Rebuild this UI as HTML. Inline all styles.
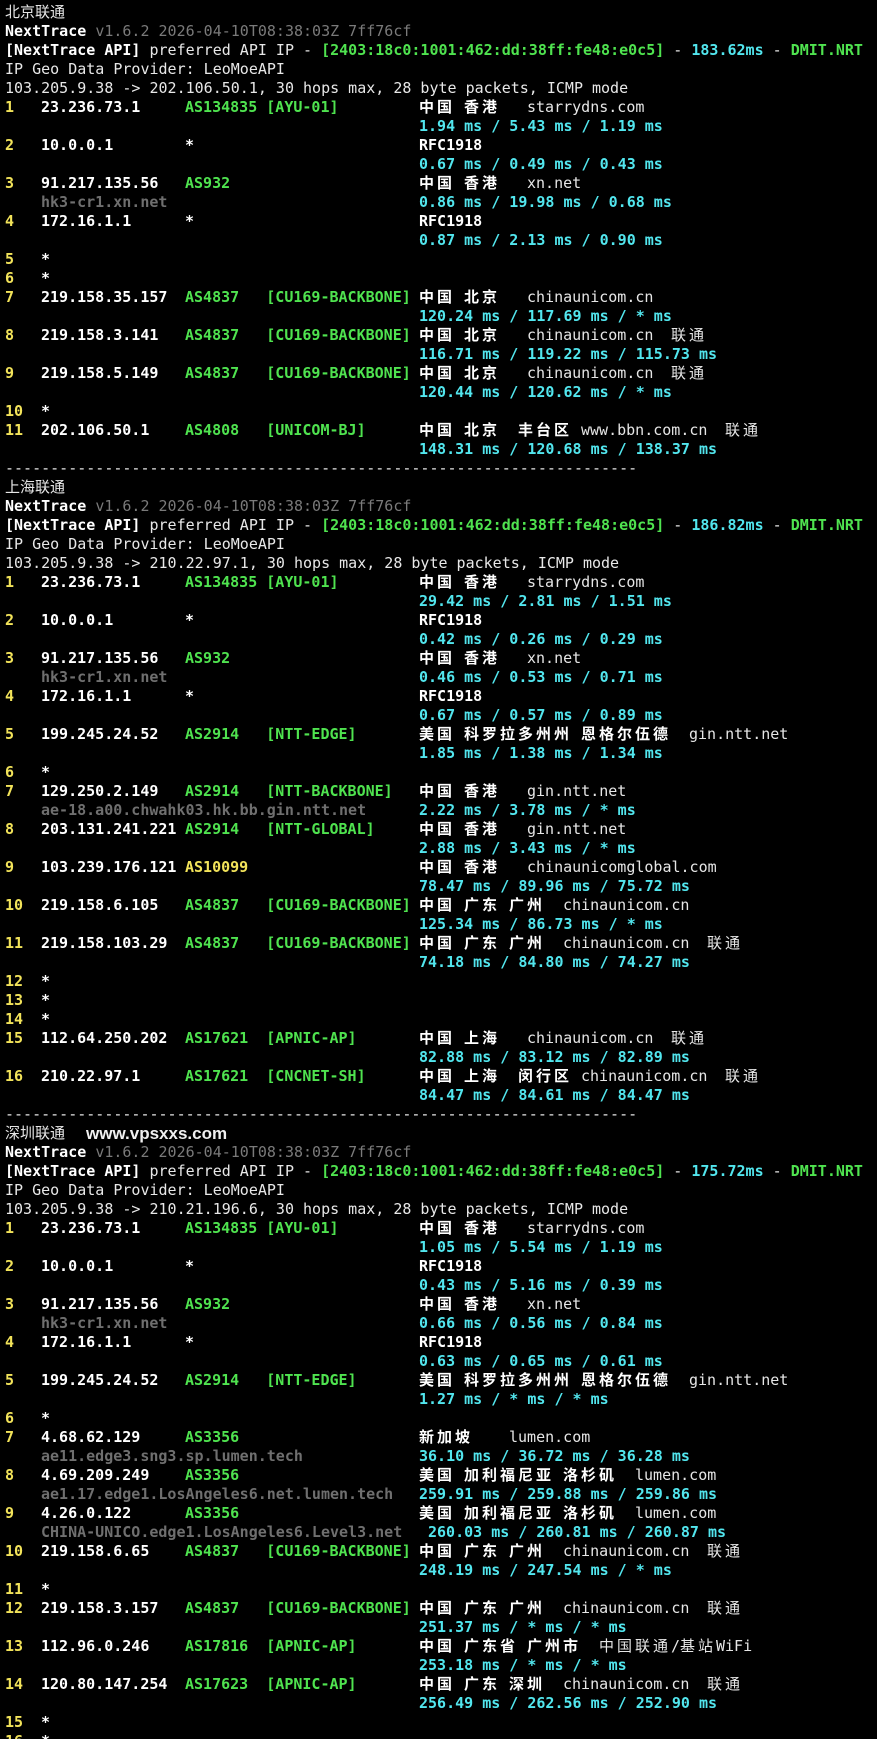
<!DOCTYPE html>
<html><head><meta charset="utf-8"><style>
html,body{margin:0;padding:0;background:#000;width:877px;height:1739px;overflow:hidden}
body{position:relative;font-family:"DejaVu Sans Mono","Liberation Mono","Noto Sans CJK SC",monospace;font-size:15px;color:#e8e8e8}
.r{position:absolute;left:0;height:19px;line-height:19px;width:877px;white-space:pre}
.r span,.r b{position:absolute;top:0;white-space:pre}
.y{color:#f2e35a;font-weight:bold}
.w{color:#fff;font-weight:bold}
.g{color:#4fe34f;font-weight:bold}
.c{color:#52e6ee;font-weight:bold}
.d{color:#e6e6e6;font-weight:normal}
.h{color:#6f6f6f;font-weight:bold}
.v{color:#7a7a7a}
.r .z{font-family:"Noto Sans CJK SC","WenQuanYi Zen Hei",sans-serif;font-size:15px;letter-spacing:3px;color:#fff;font-weight:bold;top:-1px}
.r .zn{font-family:"Noto Sans CJK SC","WenQuanYi Zen Hei",sans-serif;font-size:15px;letter-spacing:3px;color:#e6e6e6;font-weight:normal;top:-1px}
.r .t{font-family:"Noto Sans CJK SC","WenQuanYi Zen Hei",sans-serif;font-size:15px;color:#e6e6e6;left:5px;top:-1px}
.a0{left:5px}.a4{left:41px}.a20{left:185px}.a29{left:266px}.a46{left:419px}.a47{left:428px}
.a51{left:464px}.a56{left:509px}.a57{left:518px}.a58{left:527px}.a62{left:563px}.a64{left:581px}
.a66{left:599px}.a70{left:635px}.a74{left:671px}.a75{left:680px}.a76{left:689px}.a78{left:707px}.a79{left:716px}.a80{left:725px}
</style></head><body>

<div class="r" style="top:3px"><span class="t">北京联通</span></div>
<div class="r" style="top:22px"><span class="a0"><b class="w" style="position:static">NextTrace</b> <span class="v" style="position:static">v1.6.2 2026-04-10T08:38:03Z 7ff76cf</span></span></div>
<div class="r" style="top:41px"><span class="a0"><b class="w" style="position:static">[NextTrace API]</b> preferred API IP - <b class="g" style="position:static">[2403:18c0:1001:462:dd:38ff:fe48:e0c5]</b> - <b class="c" style="position:static">183.62ms</b> - <b class="g" style="position:static">DMIT.NRT</b></span></div>
<div class="r" style="top:60px"><span class="a0">IP Geo Data Provider: LeoMoeAPI</span></div>
<div class="r" style="top:79px"><span class="a0">103.205.9.38 -&gt; 202.106.50.1, 30 hops max, 28 byte packets, ICMP mode</span></div>

<div class="r" style="top:98px"><b class="y a0">1</b><b class="w a4">23.236.73.1</b><b class="g a20">AS134835 [AYU-01]</b><span class="z a46">中国</span><span class="z a51">香港</span><span class="d a58">starrydns.com</span></div>
<div class="r" style="top:117px"><b class="c a46">1.94 ms / 5.43 ms / 1.19 ms</b></div>
<div class="r" style="top:136px"><b class="y a0">2</b><b class="w a4">10.0.0.1</b><b class="w a20">*</b><b class="w a46">RFC1918</b></div>
<div class="r" style="top:155px"><b class="c a46">0.67 ms / 0.49 ms / 0.43 ms</b></div>
<div class="r" style="top:174px"><b class="y a0">3</b><b class="w a4">91.217.135.56</b><b class="g a20">AS932</b><span class="z a46">中国</span><span class="z a51">香港</span><span class="d a58">xn.net</span></div>
<div class="r" style="top:193px"><b class="h a4">hk3-cr1.xn.net</b><b class="c a46">0.86 ms / 19.98 ms / 0.68 ms</b></div>
<div class="r" style="top:212px"><b class="y a0">4</b><b class="w a4">172.16.1.1</b><b class="w a20">*</b><b class="w a46">RFC1918</b></div>
<div class="r" style="top:231px"><b class="c a46">0.87 ms / 2.13 ms / 0.90 ms</b></div>
<div class="r" style="top:250px"><b class="y a0">5</b><b class="w a4">*</b></div>
<div class="r" style="top:269px"><b class="y a0">6</b><b class="w a4">*</b></div>
<div class="r" style="top:288px"><b class="y a0">7</b><b class="w a4">219.158.35.157</b><b class="g a20">AS4837   [CU169-BACKBONE]</b><span class="z a46">中国</span><span class="z a51">北京</span><span class="d a58">chinaunicom.cn</span></div>
<div class="r" style="top:307px"><b class="c a46">120.24 ms / 117.69 ms / * ms</b></div>
<div class="r" style="top:326px"><b class="y a0">8</b><b class="w a4">219.158.3.141</b><b class="g a20">AS4837   [CU169-BACKBONE]</b><span class="z a46">中国</span><span class="z a51">北京</span><span class="d a58">chinaunicom.cn</span><span class="zn a74">联通</span></div>
<div class="r" style="top:345px"><b class="c a46">116.71 ms / 119.22 ms / 115.73 ms</b></div>
<div class="r" style="top:364px"><b class="y a0">9</b><b class="w a4">219.158.5.149</b><b class="g a20">AS4837   [CU169-BACKBONE]</b><span class="z a46">中国</span><span class="z a51">北京</span><span class="d a58">chinaunicom.cn</span><span class="zn a74">联通</span></div>
<div class="r" style="top:383px"><b class="c a46">120.44 ms / 120.62 ms / * ms</b></div>
<div class="r" style="top:402px"><b class="y a0">10</b><b class="w a4">*</b></div>
<div class="r" style="top:421px"><b class="y a0">11</b><b class="w a4">202.106.50.1</b><b class="g a20">AS4808   [UNICOM-BJ]</b><span class="z a46">中国</span><span class="z a51">北京</span><span class="z a57">丰台区</span><span class="d a64">www.bbn.com.cn</span><span class="zn a80">联通</span></div>
<div class="r" style="top:440px"><b class="c a46">148.31 ms / 120.68 ms / 138.37 ms</b></div>
<div class="r" style="top:459px"><span class="a0">----------------------------------------------------------------------</span></div>

<div class="r" style="top:478px"><span class="t">上海联通</span></div>
<div class="r" style="top:497px"><span class="a0"><b class="w" style="position:static">NextTrace</b> <span class="v" style="position:static">v1.6.2 2026-04-10T08:38:03Z 7ff76cf</span></span></div>
<div class="r" style="top:516px"><span class="a0"><b class="w" style="position:static">[NextTrace API]</b> preferred API IP - <b class="g" style="position:static">[2403:18c0:1001:462:dd:38ff:fe48:e0c5]</b> - <b class="c" style="position:static">186.82ms</b> - <b class="g" style="position:static">DMIT.NRT</b></span></div>
<div class="r" style="top:535px"><span class="a0">IP Geo Data Provider: LeoMoeAPI</span></div>
<div class="r" style="top:554px"><span class="a0">103.205.9.38 -&gt; 210.22.97.1, 30 hops max, 28 byte packets, ICMP mode</span></div>

<div class="r" style="top:573px"><b class="y a0">1</b><b class="w a4">23.236.73.1</b><b class="g a20">AS134835 [AYU-01]</b><span class="z a46">中国</span><span class="z a51">香港</span><span class="d a58">starrydns.com</span></div>
<div class="r" style="top:592px"><b class="c a46">29.42 ms / 2.81 ms / 1.51 ms</b></div>
<div class="r" style="top:611px"><b class="y a0">2</b><b class="w a4">10.0.0.1</b><b class="w a20">*</b><b class="w a46">RFC1918</b></div>
<div class="r" style="top:630px"><b class="c a46">0.42 ms / 0.26 ms / 0.29 ms</b></div>
<div class="r" style="top:649px"><b class="y a0">3</b><b class="w a4">91.217.135.56</b><b class="g a20">AS932</b><span class="z a46">中国</span><span class="z a51">香港</span><span class="d a58">xn.net</span></div>
<div class="r" style="top:668px"><b class="h a4">hk3-cr1.xn.net</b><b class="c a46">0.46 ms / 0.53 ms / 0.71 ms</b></div>
<div class="r" style="top:687px"><b class="y a0">4</b><b class="w a4">172.16.1.1</b><b class="w a20">*</b><b class="w a46">RFC1918</b></div>
<div class="r" style="top:706px"><b class="c a46">0.67 ms / 0.57 ms / 0.89 ms</b></div>
<div class="r" style="top:725px"><b class="y a0">5</b><b class="w a4">199.245.24.52</b><b class="g a20">AS2914   [NTT-EDGE]</b><span class="z a46">美国</span><span class="z a51">科罗拉多州州</span><span class="z a64">恩格尔伍德</span><span class="d a76">gin.ntt.net</span></div>
<div class="r" style="top:744px"><b class="c a46">1.85 ms / 1.38 ms / 1.34 ms</b></div>
<div class="r" style="top:763px"><b class="y a0">6</b><b class="w a4">*</b></div>
<div class="r" style="top:782px"><b class="y a0">7</b><b class="w a4">129.250.2.149</b><b class="g a20">AS2914   [NTT-BACKBONE]</b><span class="z a46">中国</span><span class="z a51">香港</span><span class="d a58">gin.ntt.net</span></div>
<div class="r" style="top:801px"><b class="h a4">ae-18.a00.chwahk03.hk.bb.gin.ntt.net</b><b class="c a46">2.22 ms / 3.78 ms / * ms</b></div>
<div class="r" style="top:820px"><b class="y a0">8</b><b class="w a4">203.131.241.221</b><b class="g a20">AS2914   [NTT-GLOBAL]</b><span class="z a46">中国</span><span class="z a51">香港</span><span class="d a58">gin.ntt.net</span></div>
<div class="r" style="top:839px"><b class="c a46">2.88 ms / 3.43 ms / * ms</b></div>
<div class="r" style="top:858px"><b class="y a0">9</b><b class="w a4">103.239.176.121</b><b class="y a20">AS10099</b><span class="z a46">中国</span><span class="z a51">香港</span><span class="d a58">chinaunicomglobal.com</span></div>
<div class="r" style="top:877px"><b class="c a46">78.47 ms / 89.96 ms / 75.72 ms</b></div>
<div class="r" style="top:896px"><b class="y a0">10</b><b class="w a4">219.158.6.105</b><b class="g a20">AS4837   [CU169-BACKBONE]</b><span class="z a46">中国</span><span class="z a51">广东</span><span class="z a56">广州</span><span class="d a62">chinaunicom.cn</span></div>
<div class="r" style="top:915px"><b class="c a46">125.34 ms / 86.73 ms / * ms</b></div>
<div class="r" style="top:934px"><b class="y a0">11</b><b class="w a4">219.158.103.29</b><b class="g a20">AS4837   [CU169-BACKBONE]</b><span class="z a46">中国</span><span class="z a51">广东</span><span class="z a56">广州</span><span class="d a62">chinaunicom.cn</span><span class="zn a78">联通</span></div>
<div class="r" style="top:953px"><b class="c a46">74.18 ms / 84.80 ms / 74.27 ms</b></div>
<div class="r" style="top:972px"><b class="y a0">12</b><b class="w a4">*</b></div>
<div class="r" style="top:991px"><b class="y a0">13</b><b class="w a4">*</b></div>
<div class="r" style="top:1010px"><b class="y a0">14</b><b class="w a4">*</b></div>
<div class="r" style="top:1029px"><b class="y a0">15</b><b class="w a4">112.64.250.202</b><b class="g a20">AS17621  [APNIC-AP]</b><span class="z a46">中国</span><span class="z a51">上海</span><span class="d a58">chinaunicom.cn</span><span class="zn a74">联通</span></div>
<div class="r" style="top:1048px"><b class="c a46">82.88 ms / 83.12 ms / 82.89 ms</b></div>
<div class="r" style="top:1067px"><b class="y a0">16</b><b class="w a4">210.22.97.1</b><b class="g a20">AS17621  [CNCNET-SH]</b><span class="z a46">中国</span><span class="z a51">上海</span><span class="z a57">闵行区</span><span class="d a64">chinaunicom.cn</span><span class="zn a80">联通</span></div>
<div class="r" style="top:1086px"><b class="c a46">84.47 ms / 84.61 ms / 84.47 ms</b></div>
<div class="r" style="top:1105px"><span class="a0">----------------------------------------------------------------------</span></div>

<div class="r" style="top:1124px"><span class="t">深圳联通</span><span style="left:86px;font-family:'Liberation Sans',sans-serif;font-size:17px;font-weight:bold;color:#f0f0f0">www.vpsxxs.com</span></div>
<div class="r" style="top:1143px"><span class="a0"><b class="w" style="position:static">NextTrace</b> <span class="v" style="position:static">v1.6.2 2026-04-10T08:38:03Z 7ff76cf</span></span></div>
<div class="r" style="top:1162px"><span class="a0"><b class="w" style="position:static">[NextTrace API]</b> preferred API IP - <b class="g" style="position:static">[2403:18c0:1001:462:dd:38ff:fe48:e0c5]</b> - <b class="c" style="position:static">175.72ms</b> - <b class="g" style="position:static">DMIT.NRT</b></span></div>
<div class="r" style="top:1181px"><span class="a0">IP Geo Data Provider: LeoMoeAPI</span></div>
<div class="r" style="top:1200px"><span class="a0">103.205.9.38 -&gt; 210.21.196.6, 30 hops max, 28 byte packets, ICMP mode</span></div>

<div class="r" style="top:1219px"><b class="y a0">1</b><b class="w a4">23.236.73.1</b><b class="g a20">AS134835 [AYU-01]</b><span class="z a46">中国</span><span class="z a51">香港</span><span class="d a58">starrydns.com</span></div>
<div class="r" style="top:1238px"><b class="c a46">1.05 ms / 5.54 ms / 1.19 ms</b></div>
<div class="r" style="top:1257px"><b class="y a0">2</b><b class="w a4">10.0.0.1</b><b class="w a20">*</b><b class="w a46">RFC1918</b></div>
<div class="r" style="top:1276px"><b class="c a46">0.43 ms / 5.16 ms / 0.39 ms</b></div>
<div class="r" style="top:1295px"><b class="y a0">3</b><b class="w a4">91.217.135.56</b><b class="g a20">AS932</b><span class="z a46">中国</span><span class="z a51">香港</span><span class="d a58">xn.net</span></div>
<div class="r" style="top:1314px"><b class="h a4">hk3-cr1.xn.net</b><b class="c a46">0.66 ms / 0.56 ms / 0.84 ms</b></div>
<div class="r" style="top:1333px"><b class="y a0">4</b><b class="w a4">172.16.1.1</b><b class="w a20">*</b><b class="w a46">RFC1918</b></div>
<div class="r" style="top:1352px"><b class="c a46">0.63 ms / 0.65 ms / 0.61 ms</b></div>
<div class="r" style="top:1371px"><b class="y a0">5</b><b class="w a4">199.245.24.52</b><b class="g a20">AS2914   [NTT-EDGE]</b><span class="z a46">美国</span><span class="z a51">科罗拉多州州</span><span class="z a64">恩格尔伍德</span><span class="d a76">gin.ntt.net</span></div>
<div class="r" style="top:1390px"><b class="c a46">1.27 ms / * ms / * ms</b></div>
<div class="r" style="top:1409px"><b class="y a0">6</b><b class="w a4">*</b></div>
<div class="r" style="top:1428px"><b class="y a0">7</b><b class="w a4">4.68.62.129</b><b class="g a20">AS3356</b><span class="z a46">新加坡</span><span class="d a56">lumen.com</span></div>
<div class="r" style="top:1447px"><b class="h a4">ae11.edge3.sng3.sp.lumen.tech</b><b class="c a46">36.10 ms / 36.72 ms / 36.28 ms</b></div>
<div class="r" style="top:1466px"><b class="y a0">8</b><b class="w a4">4.69.209.249</b><b class="g a20">AS3356</b><span class="z a46">美国</span><span class="z a51">加利福尼亚</span><span class="z a62">洛杉矶</span><span class="d a70">lumen.com</span></div>
<div class="r" style="top:1485px"><b class="h a4">ae1.17.edge1.LosAngeles6.net.lumen.tech</b><b class="c a46">259.91 ms / 259.88 ms / 259.86 ms</b></div>
<div class="r" style="top:1504px"><b class="y a0">9</b><b class="w a4">4.26.0.122</b><b class="g a20">AS3356</b><span class="z a46">美国</span><span class="z a51">加利福尼亚</span><span class="z a62">洛杉矶</span><span class="d a70">lumen.com</span></div>
<div class="r" style="top:1523px"><b class="h a4">CHINA-UNICO.edge1.LosAngeles6.Level3.net</b><b class="c a47">260.03 ms / 260.81 ms / 260.87 ms</b></div>
<div class="r" style="top:1542px"><b class="y a0">10</b><b class="w a4">219.158.6.65</b><b class="g a20">AS4837   [CU169-BACKBONE]</b><span class="z a46">中国</span><span class="z a51">广东</span><span class="z a56">广州</span><span class="d a62">chinaunicom.cn</span><span class="zn a78">联通</span></div>
<div class="r" style="top:1561px"><b class="c a46">248.19 ms / 247.54 ms / * ms</b></div>
<div class="r" style="top:1580px"><b class="y a0">11</b><b class="w a4">*</b></div>
<div class="r" style="top:1599px"><b class="y a0">12</b><b class="w a4">219.158.3.157</b><b class="g a20">AS4837   [CU169-BACKBONE]</b><span class="z a46">中国</span><span class="z a51">广东</span><span class="z a56">广州</span><span class="d a62">chinaunicom.cn</span><span class="zn a78">联通</span></div>
<div class="r" style="top:1618px"><b class="c a46">251.37 ms / * ms / * ms</b></div>
<div class="r" style="top:1637px"><b class="y a0">13</b><b class="w a4">112.96.0.246</b><b class="g a20">AS17816  [APNIC-AP]</b><span class="z a46">中国</span><span class="z a51">广东省</span><span class="z a58">广州市</span><span class="zn a66">中国联通</span><span class="d a74">/</span><span class="zn a75">基站</span><span class="d a79">WiFi</span></div>
<div class="r" style="top:1656px"><b class="c a46">253.18 ms / * ms / * ms</b></div>
<div class="r" style="top:1675px"><b class="y a0">14</b><b class="w a4">120.80.147.254</b><b class="g a20">AS17623  [APNIC-AP]</b><span class="z a46">中国</span><span class="z a51">广东</span><span class="z a56">深圳</span><span class="d a62">chinaunicom.cn</span><span class="zn a78">联通</span></div>
<div class="r" style="top:1694px"><b class="c a46">256.49 ms / 262.56 ms / 252.90 ms</b></div>
<div class="r" style="top:1713px"><b class="y a0">15</b><b class="w a4">*</b></div>
<div class="r" style="top:1732px"><b class="y a0">16</b><b class="w a4">*</b></div>

</body></html>
